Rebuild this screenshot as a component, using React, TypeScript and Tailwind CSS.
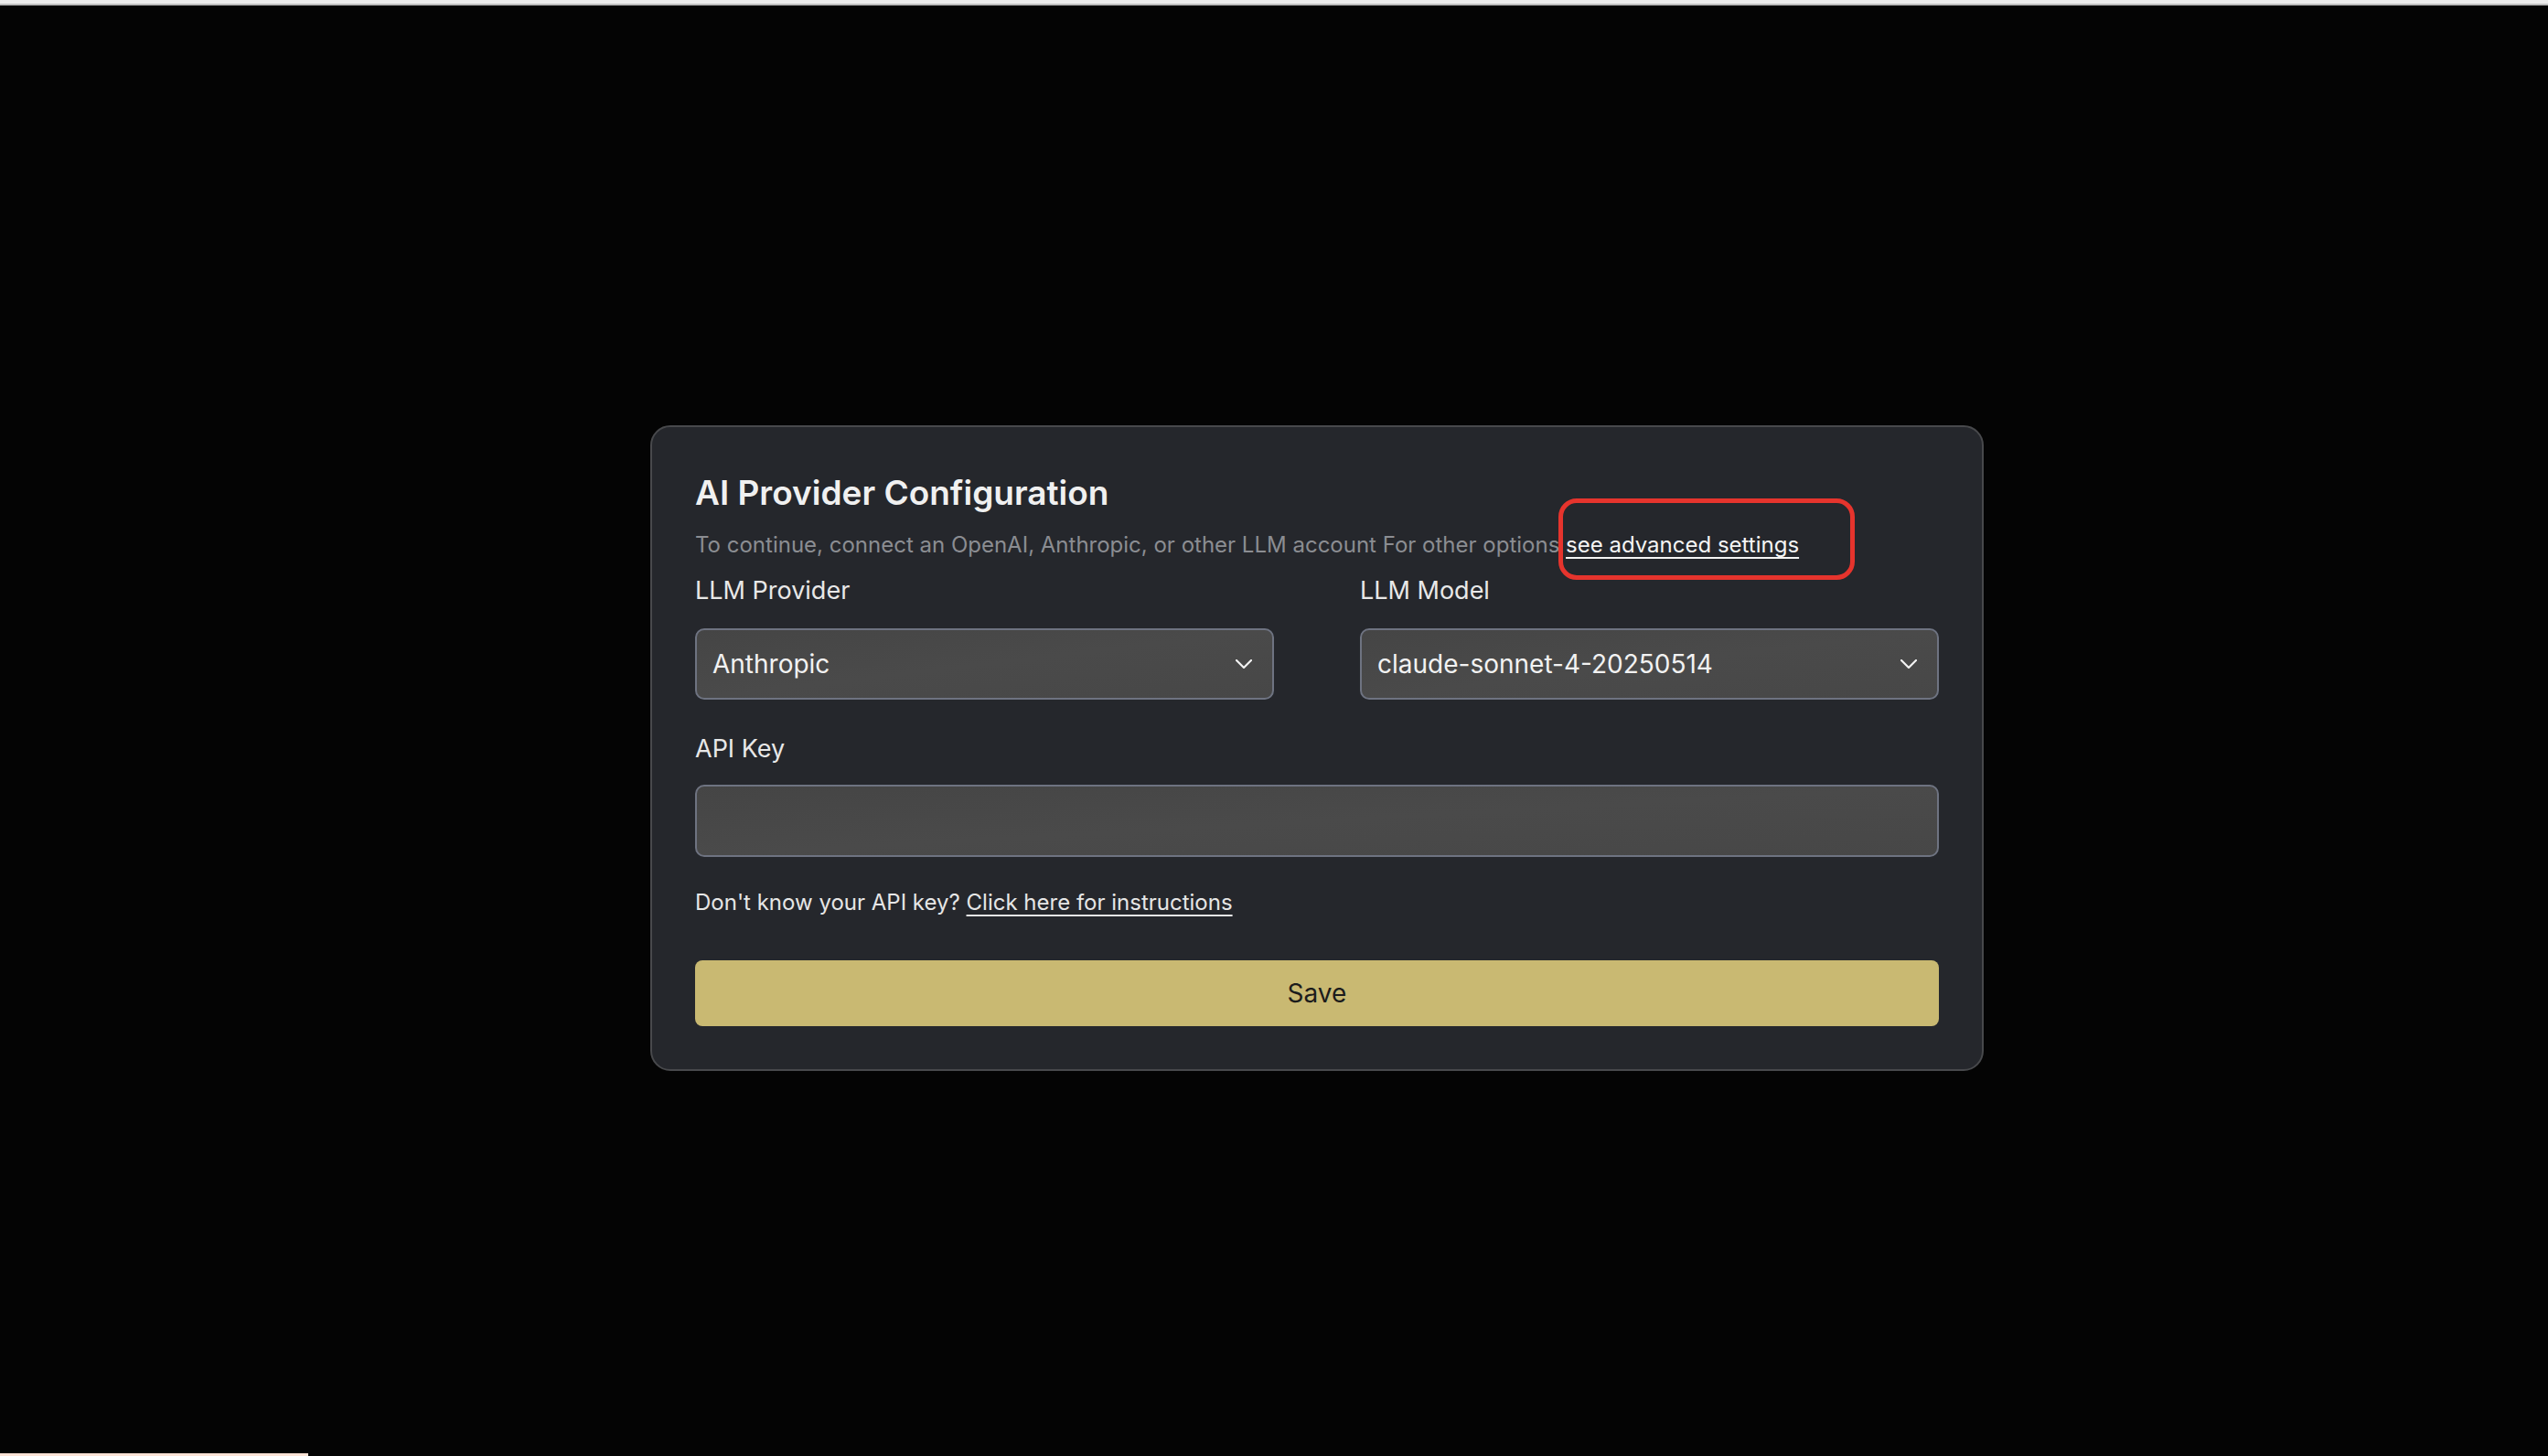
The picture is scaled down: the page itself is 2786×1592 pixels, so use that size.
import { useState } from "react";

// Simple chevron used by the two select fields
const Chevron = () => (
  <svg width="18" height="10" viewBox="0 0 18 10" fill="none" className="shrink-0">
    <polyline points="1,1 9,9 17,1" stroke="#f2f2f2" strokeWidth="2.2" strokeLinecap="round" strokeLinejoin="round" />
  </svg>
);

interface SelectFieldProps {
  label: string;
  value: string;
}

const SelectField = ({ label, value }: SelectFieldProps) => (
  <div className="flex flex-col">
    <label className="text-[27px] leading-[36px] text-[#e8e8e8]">{label}</label>
    <div className="mt-[23px] h-[78px] flex items-center justify-between pl-[17px] pr-[22px] rounded-[10px] border-2 border-[#6e7381] bg-gradient-to-br from-[#454545] via-[#4a4a4a] to-[#474747]">
      <span className="text-[28px] text-[#f2f2f2]">{value}</span>
      <Chevron />
    </div>
  </div>
);

const App = () => {
  const [apiKey, setApiKey] = useState("");

  return (
    <div className="min-h-[1592px] w-full bg-[#040404] flex flex-col font-['Inter',sans-serif]">
      {/* browser chrome strip */}
      <div className="h-[4px] bg-[#ececec]" />
      <div className="h-[2px] bg-[#bdbdbd]" />

      <div className="flex-1 pl-[711px] pt-[459px]">
        <div className="w-[1458px] rounded-[22px] border-2 border-[#48494c] bg-[#25272c] px-[47px] pt-[49px] pb-[47px]">
          <h1 className="text-[37px] leading-[46px] font-semibold text-[#f0f0f0]">AI Provider Configuration</h1>

          <p className="mt-[18px] text-[24px] leading-[32px] text-[#8b8d92]">
            To continue, connect an OpenAI, Anthropic, or other LLM account For other options{" "}
            <span className="relative inline-block">
              <a className="text-[#f5f5f5] underline underline-offset-[5px] decoration-2 cursor-pointer">see advanced settings</a>
              <span className="pointer-events-none absolute left-[-8px] top-[-35px] w-[324px] h-[89px] rounded-[20px] border-[5px] border-[#e6342d]" />
            </span>
          </p>

          <div className="mt-[16px] grid grid-cols-2 gap-x-[94px]">
            <SelectField label="LLM Provider" value="Anthropic" />
            <SelectField label="LLM Model" value="claude-sonnet-4-20250514" />
          </div>

          <div className="mt-[36px] flex flex-col">
            <label className="text-[27px] leading-[36px] text-[#e8e8e8]">API Key</label>
            <input
              type="password"
              value={apiKey}
              onChange={(e) => setApiKey(e.target.value)}
              className="mt-[21px] h-[79px] w-full rounded-[10px] border-2 border-[#6e7381] bg-gradient-to-br from-[#454545] via-[#4a4a4a] to-[#474747] px-[17px] text-[28px] text-white outline-none"
            />
          </div>

          <p className="mt-[34px] text-[24px] leading-[32px] text-[#e6e6e6]">
            Don't know your API key?{" "}
            <a className="underline underline-offset-[5px] decoration-2 cursor-pointer">Click here for instructions</a>
          </p>

          <button className="mt-[47px] h-[72px] w-full rounded-[8px] bg-[#c9b972] text-[28px] text-[#1c1c1c]">Save</button>
        </div>
      </div>

      {/* bottom strip */}
      <div className="h-[3px] w-[337px] bg-[#fce3d6]" />
    </div>
  );
};

export default App;
